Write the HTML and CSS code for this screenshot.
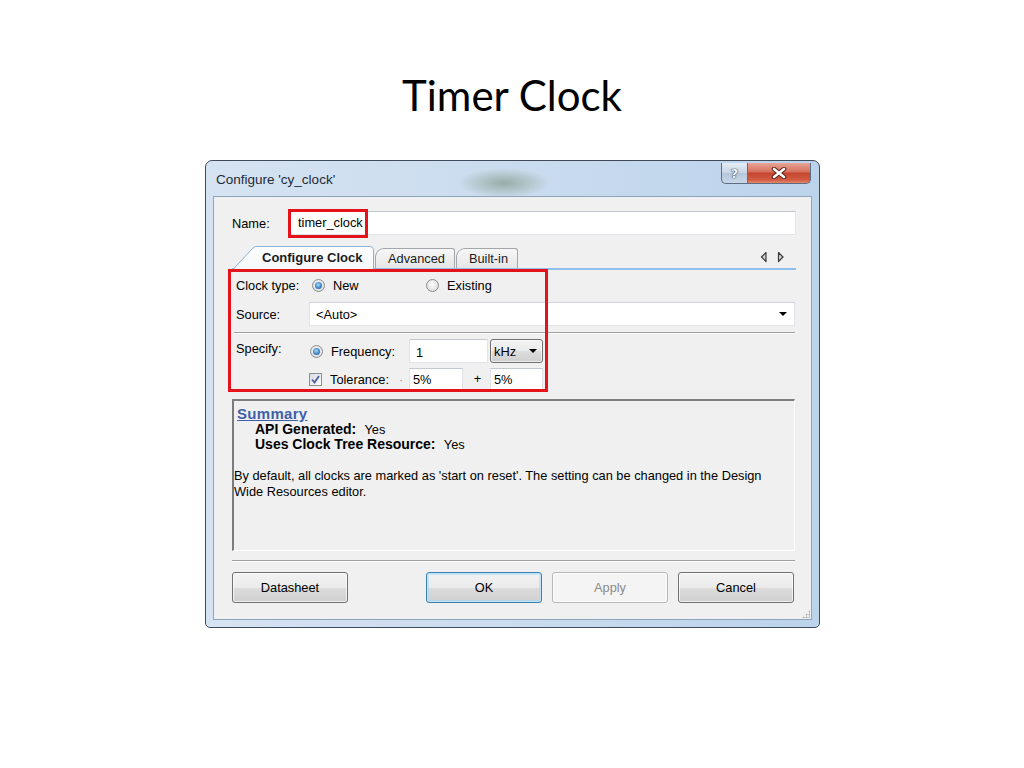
FILE: index.html
```html
<!DOCTYPE html>
<html lang="en">

<head>
    <meta charset="UTF-8">
    <meta name="viewport" content="width=device-width, initial-scale=1.0">
    <title>Timer Clock</title>
    <link rel="stylesheet" href="styles.css">
</head>

<body>
    <h1 class="slide-title">Timer Clock</h1>

    <div class="window">
        <div class="titlebar">
            <span class="window-title">Configure 'cy_clock'</span>
            <div class="caption-buttons">
                <span class="cap-btn cap-help">?</span>
                <span class="cap-btn cap-close">
                    <svg width="16" height="12" viewBox="0 0 16 12">
                        <path d="M3 2 L13 10 M13 2 L3 10" stroke="#5a1d12" stroke-width="4.5" stroke-linecap="round" />
                        <path d="M3 2 L13 10 M13 2 L3 10" stroke="#fff" stroke-width="2.6" stroke-linecap="round" />
                    </svg>
                </span>
            </div>
        </div>

        <div class="client">
            <div class="name-row">
                <span class="label name-label">Name:</span>
                <div class="textbox name-box">timer_clock</div>
            </div>

            <div class="tab-strip">
                <div class="tab tab-active">
                    <svg class="tab-shape" viewBox="0 0 142 24" preserveAspectRatio="none">
                        <defs>
                            <linearGradient id="tabfill" x1="0" y1="0" x2="0" y2="1">
                                <stop offset="0" stop-color="#ffffff" />
                                <stop offset="1" stop-color="#f4f7fb" />
                            </linearGradient>
                        </defs>
                        <path d="M0.5 24 L21 2 Q22.5 0.5 25 0.5 H138 Q141.5 0.5 141.5 4 V24" fill="url(#tabfill)" stroke="#8db2d8" />
                    </svg>
                    <span class="tab-text">Configure Clock</span>
                </div>
                <div class="tab">Advanced</div>
                <div class="tab">Built-in</div>
                <div class="tab-arrows">
                    <svg width="28" height="12" viewBox="0 0 28 12">
                        <path d="M6 1.5 L1.5 6 L6 10.5 Z" fill="#d4d4d4" stroke="#3a3a3a" stroke-width="1.2" stroke-linejoin="round" />
                        <path d="M18.5 1.5 L23 6 L18.5 10.5 Z" fill="#d4d4d4" stroke="#3a3a3a" stroke-width="1.2" stroke-linejoin="round" />
                    </svg>
                </div>
            </div>

            <div class="panel">
                <div class="row row-type">
                    <span class="label">Clock type:</span>
                    <span class="option option-new"><span class="radio checked"></span>New</span>
                    <span class="option"><span class="radio"></span>Existing</span>
                </div>
                <div class="row row-source">
                    <span class="label">Source:</span>
                    <div class="combo">
                        <span>&lt;Auto&gt;</span>
                        <span class="drop-arrow"></span>
                    </div>
                </div>
                <div class="etched"></div>
                <div class="row row-specify">
                    <span class="label label-top">Specify:</span>
                    <span class="option option-freq"><span class="radio checked"></span>Frequency:</span>
                    <div class="textbox freq-box">1</div>
                    <div class="unit-select">kHz<span class="drop-arrow"></span></div>
                </div>
                <div class="row row-tolerance">
                    <span class="label"></span>
                    <span class="option option-tol">
                        <span class="checkbox">
                            <svg width="11" height="11" viewBox="0 0 11 11">
                                <path d="M2 5.5 L4.5 8.5 L9 2" fill="none" stroke="#4b5f9c" stroke-width="1.8" />
                            </svg>
                        </span>Tolerance:<span class="minus">·</span>
                    </span>
                    <div class="textbox tol-box">5%</div>
                    <span class="plus">+</span>
                    <div class="textbox tol-box">5%</div>
                </div>
            </div>

            <div class="summary">
                <div class="summary-head">Summary</div>
                <div class="summary-item"><b>API Generated:</b> Yes</div>
                <div class="summary-item"><b>Uses Clock Tree Resource:</b> Yes</div>
                <p class="summary-note">By default, all clocks are marked as 'start on reset'. The setting can be changed in the Design Wide Resources editor.</p>
            </div>

            <div class="etched etched-bottom"></div>

            <div class="button-row">
                <button class="btn">Datasheet</button>
                <span class="spacer"></span>
                <button class="btn btn-default">OK</button>
                <button class="btn btn-disabled">Apply</button>
                <button class="btn">Cancel</button>
            </div>

            <!-- red callouts drawn over the dialog -->
            <div class="mark mark-name"></div>
            <div class="mark mark-panel"></div>
            <div class="size-grip"></div>
        </div>
    </div>
</body>

</html>
```

FILE: styles.css
```css
body {
    margin: 0;
    background-color: #fff;
    font-family: "Liberation Sans", Arial, sans-serif;
    color: #000;
}

.slide-title {
    margin: 0;
    height: 160px;
    box-sizing: border-box;
    padding-top: 70px;
    text-align: center;
    font-family: Lato, "Open Sans", sans-serif;
    font-weight: 400;
    font-size: 42px;
    line-height: 1.2;
}

/* window frame */
.window {
    width: 615px;
    height: 468px;
    margin-left: 205px;
    box-sizing: border-box;
    border: 1px solid #3f4b5a;
    border-radius: 7px 7px 5px 5px;
    padding: 0 7px 7px;
    background:
        radial-gradient(ellipse 46px 15px at 298px 22px, rgba(110, 135, 105, 0.55), transparent),
        linear-gradient(90deg, #d5e3f2 0%, #c9dbee 55%, #bcd3ec 100%);
}

.titlebar {
    height: 35px;
    display: flex;
    align-items: flex-start;
    justify-content: space-between;
}

.window-title {
    margin-top: 11px;
    padding-left: 3px;
    font-size: 13.5px;
    color: #1e2a36;
}

.caption-buttons {
    display: flex;
    margin-top: 2px;
    margin-right: 1px;
}

.cap-btn {
    height: 21px;
    box-sizing: border-box;
    display: flex;
    align-items: center;
    justify-content: center;
    border: 1px solid #5d6d82;
    border-top: none;
}

.cap-help {
    width: 26px;
    border-radius: 0 0 0 5px;
    border-right: none;
    background: linear-gradient(#e4ecf5, #c7d5e4 50%, #b4c6da 51%, #c9d8e8);
    font-family: "DejaVu Sans", sans-serif;
    font-weight: bold;
    font-size: 13px;
    color: #f4f7fa;
    text-shadow: 0 0 1px #3a4656, 0 0 1px #3a4656, 0 0 1px #3a4656;
}

.cap-close {
    width: 64px;
    border-radius: 0 0 5px 0;
    background: linear-gradient(#e8a596, #d7705d 45%, #c5452d 50%, #d25d44 85%, #e3896c);
}

/* client area */
.client {
    position: relative;
    height: 424px;
    box-sizing: border-box;
    border: 1px solid #8ea4bd;
    background-color: #f0f0f0;
    padding: 14px 15px 0 18px;
    font-size: 12.8px;
}

.name-row {
    display: flex;
    align-items: center;
    height: 24px;
}

.name-label {
    width: 58px;
}

.textbox {
    box-sizing: border-box;
    height: 24px;
    line-height: 22px;
    background-color: #fff;
    border: 1px solid #e1e3e8;
    border-top-color: #c4c8cf;
    padding: 0 6px;
}

.name-box {
    flex: 1;
    padding-left: 7px;
}

/* tabs */
.tab-strip {
    display: flex;
    align-items: flex-end;
    height: 22px;
    margin-top: 11px;
    border-bottom: 2px solid #8fc0ec;
}

.tab {
    position: relative;
    height: 20px;
    box-sizing: border-box;
    padding: 0 9px 0 12px;
    line-height: 19px;
    border: 1px solid #a3a6ab;
    border-bottom: none;
    border-radius: 9px 3px 0 0;
    background: linear-gradient(#f7f7f7, #e6e6e6);
    color: #1b1b1b;
    margin-left: 1px;
}

.tab-active {
    width: 142px;
    height: 24px;
    padding: 0 0 0 30px;
    border: none;
    background: none;
    margin-left: 0;
    margin-bottom: -2px;
    line-height: 23px;
    font-weight: bold;
    font-size: 13px;
}

.tab-shape {
    position: absolute;
    left: 0;
    top: 0;
    width: 142px;
    height: 24px;
}

.tab-text {
    position: relative;
}

.tab-arrows {
    margin-left: auto;
    margin-right: 8px;
    align-self: center;
    height: 12px;
}

/* tab page */
.panel {
    padding-left: 4px;
}

.row {
    display: flex;
    align-items: center;
}

.row .label {
    width: 73px;
    flex: none;
}

.row-type {
    height: 18px;
    margin-top: 6px;
}

.option {
    display: flex;
    align-items: center;
    gap: 8px;
}

.option-new {
    width: 114px;
    padding-left: 3px;
}

.radio {
    width: 13px;
    height: 13px;
    box-sizing: border-box;
    border-radius: 50%;
    border: 1px solid #8c8c8c;
    background: radial-gradient(circle at 50% 40%, #fdfdfd, #d4d4d4);
    position: relative;
    flex: none;
}

.radio.checked::after {
    content: "";
    position: absolute;
    left: 2px;
    top: 2px;
    width: 7px;
    height: 7px;
    border-radius: 50%;
    background: radial-gradient(circle at 45% 40%, #a9dcfb, #3f86c6 55%, #1d4f85);
}

.row-source {
    height: 24px;
    margin-top: 8px;
}

.combo {
    flex: 1;
    height: 24px;
    box-sizing: border-box;
    margin-right: 1px;
    background-color: #fff;
    border: 1px solid #e3e4e9;
    border-top-color: #d2d5db;
    display: flex;
    align-items: center;
    justify-content: space-between;
    padding: 0 7px 0 6px;
}

.drop-arrow {
    width: 0;
    height: 0;
    border-left: 4px solid transparent;
    border-right: 4px solid transparent;
    border-top: 4px solid #000;
}

.etched {
    height: 0;
    margin: 6px 1px 0 -2px;
    border-top: 1px solid #a0a0a0;
    border-bottom: 1px solid #fff;
}

.row-specify {
    height: 24px;
    margin-top: 5px;
}

.label-top {
    align-self: flex-start;
    margin-top: 2px;
}

.option-freq {
    width: 99px;
    padding-left: 1px;
    gap: 8px;
}

.freq-box {
    width: 79px;
    padding-top: 2px;
}

.unit-select {
    width: 53px;
    height: 24px;
    box-sizing: border-box;
    margin-left: 2px;
    border: 1px solid #707070;
    border-radius: 3px;
    background: linear-gradient(#f2f2f2, #ebebeb 50%, #dddddd 51%, #cfcfcf);
    box-shadow: inset 0 0 0 1px rgba(255, 255, 255, 0.6);
    display: flex;
    align-items: center;
    justify-content: space-between;
    padding: 0 5px 0 3px;
    font-size: 12.8px;
}

.row-tolerance {
    height: 22px;
    margin-top: 5px;
    align-items: flex-start;
}

.option-tol {
    width: 100px;
    height: 22px;
}

.checkbox {
    width: 13px;
    height: 13px;
    box-sizing: border-box;
    border: 1px solid #8e8f8f;
    background: linear-gradient(135deg, #d9dde2, #fafafa);
    display: flex;
    align-items: center;
    justify-content: center;
    flex: none;
}

.minus {
    color: #9a9a9a;
    margin-left: 2px;
}

.tol-box {
    width: 54px;
    height: 23px;
    padding-left: 3px;
    border-bottom: none;
}

.plus {
    width: 27px;
    text-align: center;
    line-height: 22px;
    padding-left: 2px;
    box-sizing: border-box;
}

.row-tolerance .tol-box:last-child {
    width: 53px;
}

/* summary box */
.summary {
    margin-top: 9px;
    margin-right: 1px;
    height: 152px;
    box-sizing: border-box;
    border-top: 2px solid #7c7c7c;
    border-left: 2px solid #7c7c7c;
    border-right: 1px solid #fff;
    border-bottom: 1px solid #fff;
    padding: 5px 4px 0 3px;
    line-height: 15.5px;
}

.summary-head {
    font-weight: bold;
    font-size: 15px;
    letter-spacing: 0.3px;
    color: #3f5fa8;
    text-decoration: underline;
}

.summary-item {
    padding-left: 18px;
}

.summary-item b {
    font-size: 14px;
    margin-right: 5px;
}

.summary-note {
    margin: 15px 20px 0 -3px;
    line-height: 16px;
}

.etched-bottom {
    margin: 9px 1px 0 0;
}

/* buttons */
.button-row {
    display: flex;
    gap: 10px;
    margin-top: 10px;
    margin-right: 2px;
}

.spacer {
    flex: 1;
}

.btn {
    width: 116px;
    height: 31px;
    border: 1px solid #707070;
    border-radius: 3px;
    background: linear-gradient(#f2f2f2, #ebebeb 50%, #dddddd 51%, #cfcfcf);
    box-shadow: inset 0 0 0 1px rgba(255, 255, 255, 0.7);
    font-family: "Liberation Sans", Arial, sans-serif;
    font-size: 12.8px;
    color: #000;
    padding: 0;
}

.btn-default {
    border-color: #3c7fb1;
    box-shadow: inset 0 0 0 1px #bfe4f7, inset 0 0 0 2px rgba(160, 215, 245, 0.5);
}

.btn-disabled {
    border-color: #b4b8bb;
    background: #f4f4f4;
    color: #8a8a8a;
}

/* callouts */
.mark {
    position: absolute;
    border: 3px solid #e3121b;
    box-sizing: border-box;
}

.mark-name {
    left: 74px;
    top: 12px;
    width: 80px;
    height: 29px;
}

.mark-panel {
    left: 14px;
    top: 72px;
    width: 320px;
    height: 123px;
}

.size-grip {
    position: absolute;
    right: 1px;
    bottom: 1px;
    width: 8px;
    height: 8px;
    background: radial-gradient(circle, #a8a8a8 0.8px, transparent 1.2px) 0 0 / 3px 3px;
    clip-path: polygon(100% 0, 100% 100%, 0 100%);
}
```
